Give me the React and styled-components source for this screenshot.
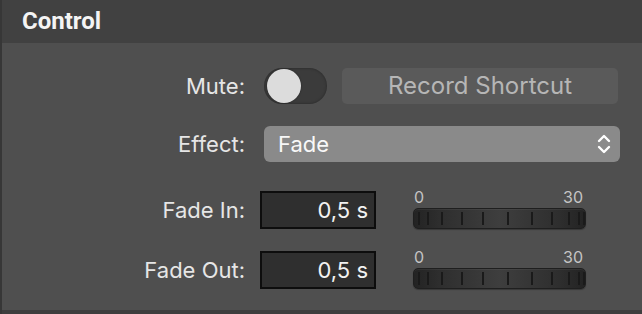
import styled, { createGlobalStyle } from "styled-components";

const GlobalStyle = createGlobalStyle`
  html, body {
    margin: 0;
    padding: 0;
    background: #505050;
  }
  * {
    box-sizing: border-box;
  }
`;

const Panel = styled.div`
  width: 642px;
  height: 314px;
  display: flex;
  flex-direction: column;
  border-left: 2px solid #373737;
  font-family: Inter, "Liberation Sans", sans-serif;
  overflow: hidden;
`;

const Header = styled.div`
  height: 43px;
  flex-shrink: 0;
  display: flex;
  align-items: center;
  padding-left: 20px;
  background: #414141;
  color: #f4f4f4;
  font-family: Roboto, "Liberation Sans", sans-serif;
  font-weight: 700;
  font-size: 24px;
  padding-bottom: 2px;
`;

const Body = styled.div`
  flex: 1;
  background: #4f4f4f;
  padding-top: 24px;
`;

const Footer = styled.div`
  height: 4px;
  flex-shrink: 0;
  background: #3e3e3e;
`;

const Row = styled.div`
  display: grid;
  grid-template-columns: 243px auto;
  column-gap: ${(p) => p.$gap}px;
  align-items: center;
  height: ${(p) => p.$height}px;
  margin-top: ${(p) => p.$top || 0}px;
`;

const Label = styled.div`
  text-align: right;
  color: #e6e6e6;
  font-size: 22px;
`;

const Controls = styled.div`
  display: flex;
  align-items: center;
  gap: ${(p) => p.$gap || 0}px;
`;

const Toggle = styled.div`
  width: 63px;
  height: 36px;
  border-radius: 18px;
  background: #3b3b3b;
  box-shadow: inset 0 0 3px rgba(0, 0, 0, 0.35);
  display: flex;
  align-items: center;
  padding-left: 3px;
`;

const Knob = styled.div`
  width: 34px;
  height: 34px;
  border-radius: 50%;
  background: #dcdcdc;
  box-shadow: 0 0 2px rgba(0, 0, 0, 0.4);
`;

const ShortcutButton = styled.div`
  width: 276px;
  height: 36px;
  border-radius: 5px;
  background: #5a5a5a;
  color: #b6b6b6;
  font-size: 24px;
  display: flex;
  align-items: center;
  justify-content: center;
`;

const Select = styled.div`
  width: 356px;
  height: 36px;
  border-radius: 6px;
  background: #8a8a8a;
  color: #f8f8f8;
  font-size: 22px;
  display: flex;
  align-items: center;
  justify-content: space-between;
  padding: 0 9px 0 14px;
`;

const NumberField = styled.div`
  width: 116px;
  height: 38px;
  border: 2px solid #0d0d0d;
  background: #2f2f2f;
  color: #f2f2f2;
  font-size: 22px;
  display: flex;
  align-items: center;
  justify-content: flex-end;
  padding-right: 6px;
`;

const Slider = styled.div`
  width: 173px;
  display: flex;
  flex-direction: column;
`;

const Scale = styled.div`
  display: flex;
  justify-content: space-between;
  color: #c4c4c4;
  font-size: 16px;
  line-height: 15px;
  padding: 0 3px 0 1px;
  margin-bottom: 3px;
`;

const Wheel = styled.div`
  height: 21px;
  border-radius: 5px;
  border: 1px solid #1f1f1f;
  background: linear-gradient(
    to right,
    #232323 0%,
    #2e2e2e 15%,
    #3e3e3e 50%,
    #2e2e2e 85%,
    #232323 100%
  );
  box-shadow: inset 0 1px 1px rgba(255, 255, 255, 0.06),
    0 1px 1px rgba(0, 0, 0, 0.3);
  overflow: hidden;
  svg {
    display: block;
  }
`;

const ticks = [5, 14, 28, 48, 69, 94, 118, 138, 155, 165, 170];

const WheelSlider = () => (
  <Slider>
    <Scale>
      <span>0</span>
      <span>30</span>
    </Scale>
    <Wheel>
      <svg width="171" height="19" viewBox="0 0 171 19">
        {ticks.map((x) => (
          <rect key={x} x={x - 1} y="3" width="2" height="13" fill="#1a1a1a" />
        ))}
      </svg>
    </Wheel>
  </Slider>
);

const Chevrons = () => (
  <svg width="14" height="22" viewBox="0 0 14 22">
    <polyline
      points="2,8 7,3 12,8"
      fill="none"
      stroke="#fff"
      strokeWidth="2.4"
      strokeLinecap="round"
      strokeLinejoin="round"
    />
    <polyline
      points="2,14 7,19 12,14"
      fill="none"
      stroke="#fff"
      strokeWidth="2.4"
      strokeLinecap="round"
      strokeLinejoin="round"
    />
  </svg>
);

const App = () => (
  <>
    <GlobalStyle />
    <Panel>
      <Header>Control</Header>
      <Body>
        <Row $gap={19} $height={37}>
          <Label>Mute:</Label>
          <Controls $gap={15}>
            <Toggle>
              <Knob />
            </Toggle>
            <ShortcutButton>Record Shortcut</ShortcutButton>
          </Controls>
        </Row>
        <Row $gap={19} $height={36} $top={22}>
          <Label>Effect:</Label>
          <Select>
            <span>Fade</span>
            <Chevrons />
          </Select>
        </Row>
        <Row $gap={15} $height={39} $top={28}>
          <Label>Fade In:</Label>
          <Controls $gap={37}>
            <NumberField>0,5 s</NumberField>
            <WheelSlider />
          </Controls>
        </Row>
        <Row $gap={15} $height={39} $top={21}>
          <Label>Fade Out:</Label>
          <Controls $gap={37}>
            <NumberField>0,5 s</NumberField>
            <WheelSlider />
          </Controls>
        </Row>
      </Body>
      <Footer />
    </Panel>
  </>
);

export default App;
